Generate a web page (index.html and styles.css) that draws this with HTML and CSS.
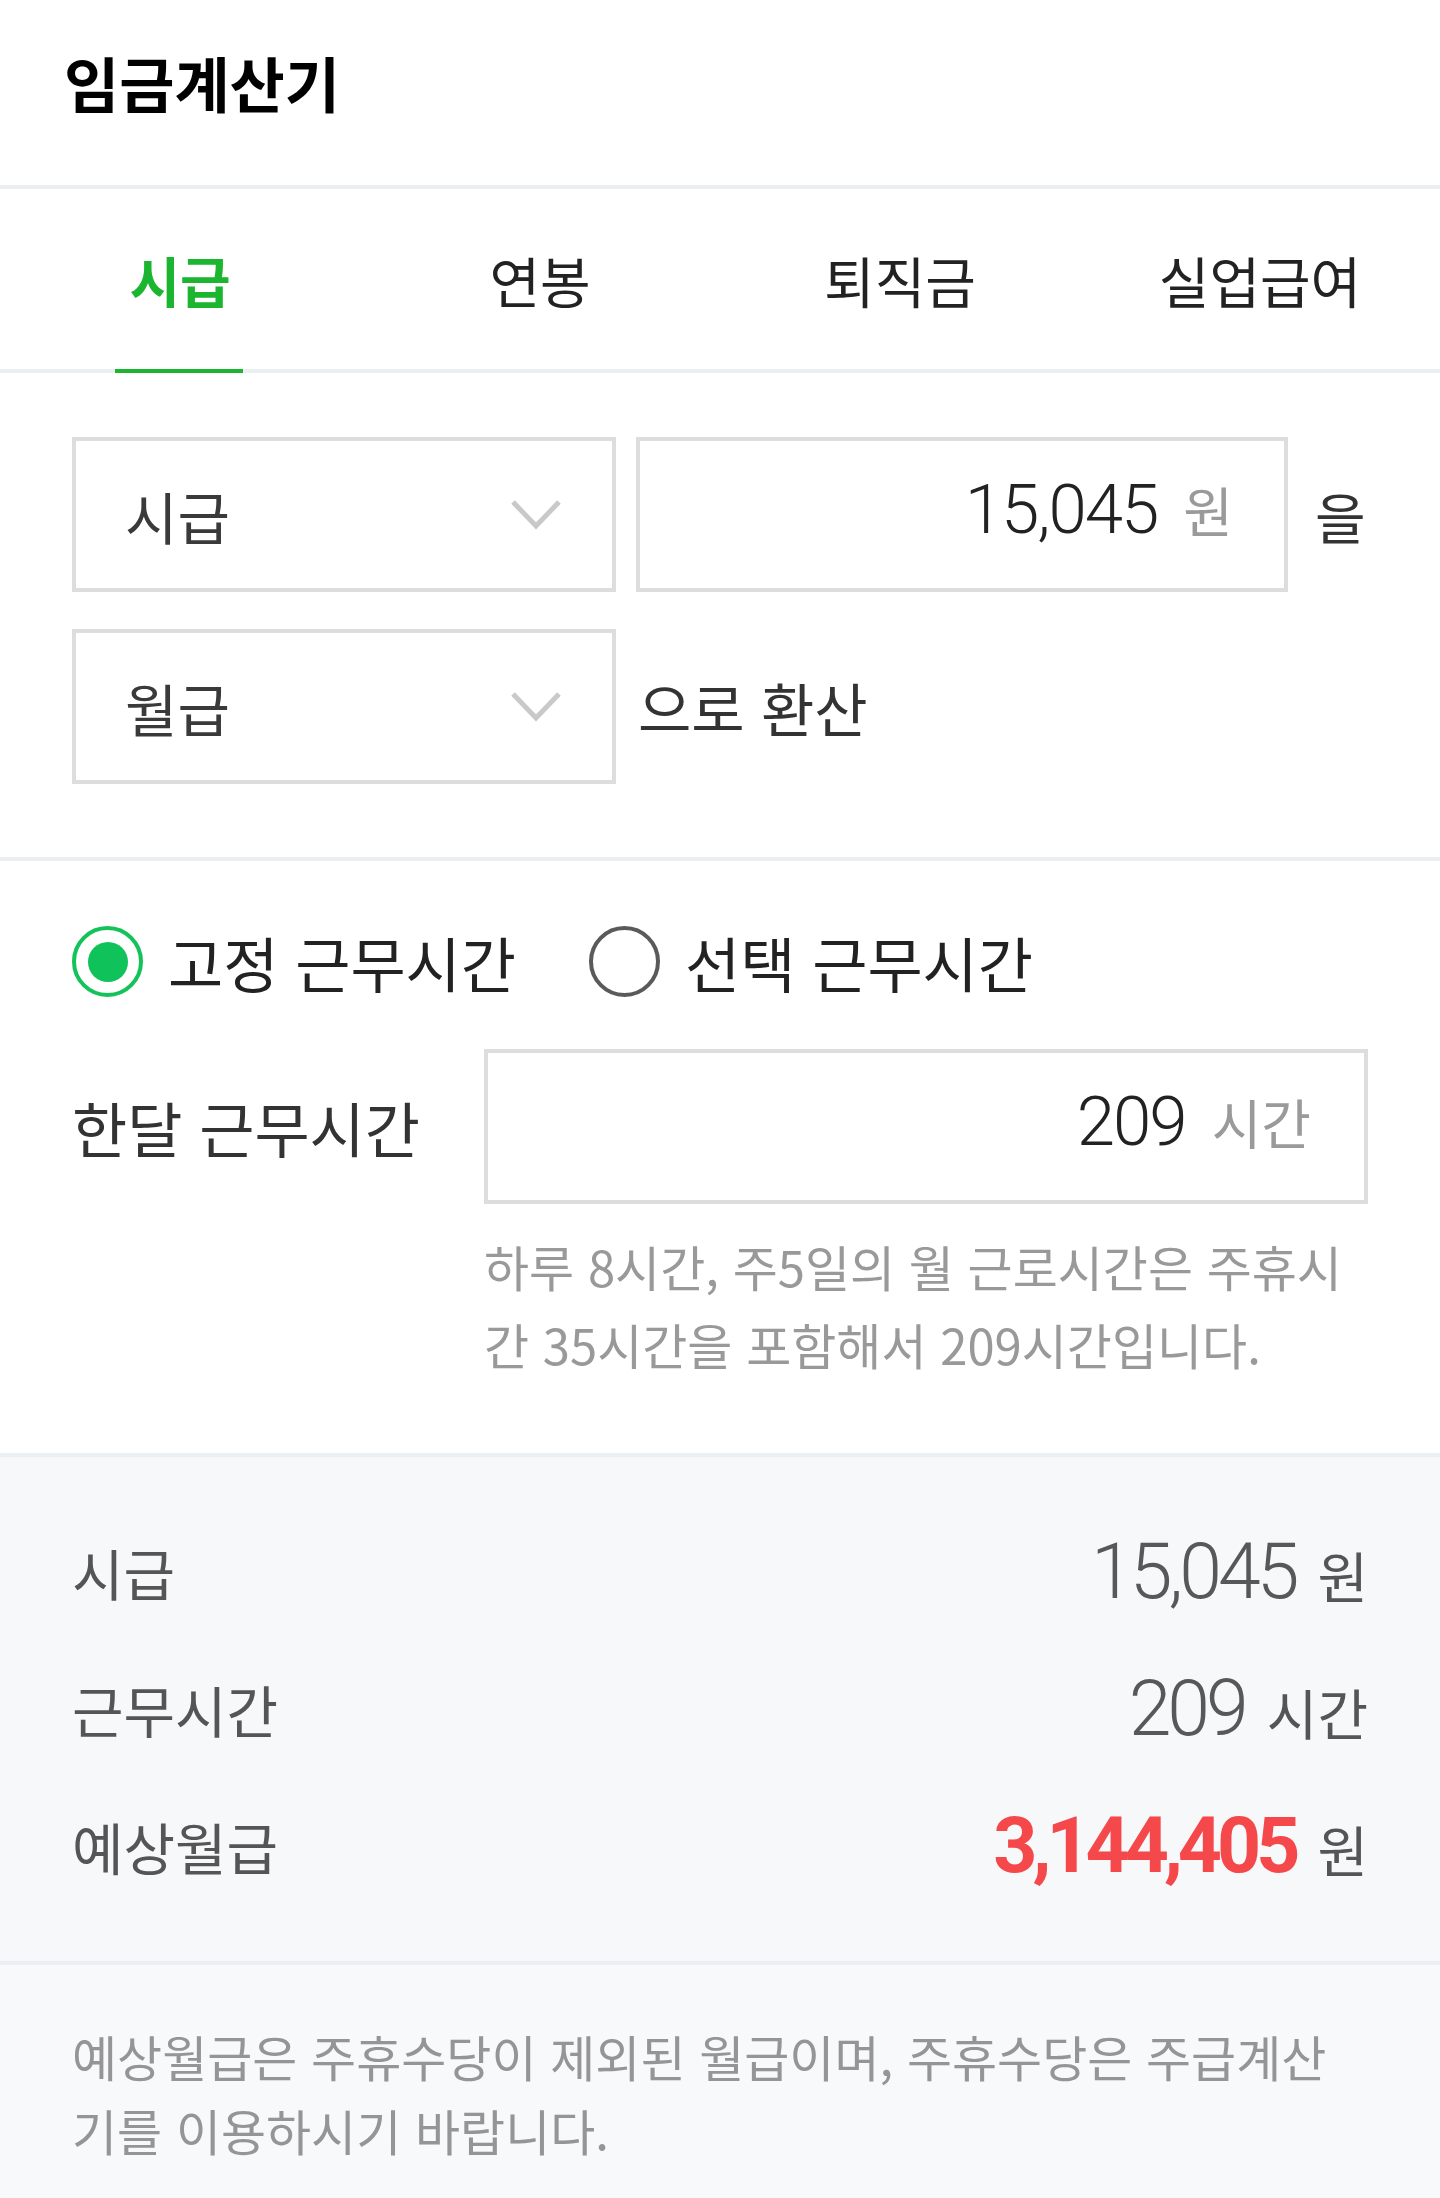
FILE: index.html
```html
<!DOCTYPE html>
<html lang="ko">
<head>
    <meta charset="UTF-8">
    <meta name="viewport" content="width=device-width, initial-scale=1.0">
    <title>임금계산기</title>
    <link rel="stylesheet" href="styles.css">
</head>
<body>
    <header class="header">
        <h1 class="title">임금계산기</h1>
    </header>

    <nav class="tabs">
        <a class="tab active">시급</a>
        <a class="tab">연봉</a>
        <a class="tab">퇴직금</a>
        <a class="tab">실업급여</a>
    </nav>

    <section class="convert">
        <div class="convert-row">
            <div class="select">
                <span>시급</span>
                <svg class="chevron" width="52" height="31" viewBox="0 0 52 31"><polyline points="3,3 26,27 49,3" fill="none" stroke="#c9c9c9" stroke-width="5"/></svg>
            </div>
            <div class="field field-amount">
                <span class="num">15,045</span>
                <span class="unit">원</span>
            </div>
            <span class="suffix">을</span>
        </div>
        <div class="convert-row">
            <div class="select">
                <span>월급</span>
                <svg class="chevron" width="52" height="31" viewBox="0 0 52 31"><polyline points="3,3 26,27 49,3" fill="none" stroke="#c9c9c9" stroke-width="5"/></svg>
            </div>
            <span class="suffix suffix-convert">으로 환산</span>
        </div>
    </section>

    <section class="hours">
        <div class="radios">
            <label class="radio checked"><span class="radio-mark"></span>고정 근무시간</label>
            <label class="radio"><span class="radio-mark"></span>선택 근무시간</label>
        </div>
        <div class="hours-row">
            <div class="hours-label">한달 근무시간</div>
            <div>
                <div class="field field-hours">
                    <span class="num">209</span>
                    <span class="unit">시간</span>
                </div>
                <p class="help">하루 8시간, 주5일의 월 근로시간은 주휴시<br>간 35시간을 포함해서 209시간입니다.</p>
            </div>
        </div>
    </section>

    <section class="result">
        <div class="result-row">
            <span class="result-label">시급</span>
            <span class="result-value"><span class="num">15,045</span><span class="unit">원</span></span>
        </div>
        <div class="result-row">
            <span class="result-label">근무시간</span>
            <span class="result-value"><span class="num">209</span><span class="unit">시간</span></span>
        </div>
        <div class="result-row">
            <span class="result-label">예상월급</span>
            <span class="result-value"><span class="num num-total">3,144,405</span><span class="unit">원</span></span>
        </div>
    </section>

    <p class="note">예상월급은 주휴수당이 제외된 월급이며, 주휴수당은 주급계산<br>기를 이용하시기 바랍니다.</p>
</body>
</html>
```

FILE: styles.css
```css
body {
    margin: 0;
    font-family: "Noto Sans CJK KR", "Noto Sans", sans-serif;
    background-color: #f8f9fb;
    color: #222;
}
.header {
    height: 189px;
    box-sizing: border-box;
    padding: 52px 0 0 64px;
    background-color: white;
    border-bottom: 4px solid #eceff2;
}
.title {
    margin: 0;
    font-size: 60px;
    line-height: 60px;
    font-weight: bold;
    color: #000;
}
.tabs {
    display: grid;
    grid-template-columns: repeat(4, 1fr);
    height: 184px;
    box-sizing: border-box;
    background-color: white;
    border-bottom: 4px solid #eceff2;
}
.tab {
    position: relative;
    display: flex;
    justify-content: center;
    align-items: center;
    font-size: 55px;
    color: #222;
}
.tab.active {
    color: #1bb530;
    font-weight: bold;
}
.tab.active::after {
    content: "";
    position: absolute;
    left: 50%;
    bottom: -4px;
    width: 128px;
    height: 4px;
    margin-left: -65px;
    background-color: #1bb530;
}
.convert {
    padding: 64px 72px 73px;
    background-color: white;
    border-bottom: 4px solid #eceff2;
    display: flex;
    flex-direction: column;
    gap: 37px;
}
.convert-row {
    display: flex;
    align-items: center;
}
.select {
    width: 544px;
    height: 155px;
    box-sizing: border-box;
    border: 4px solid #dcdddd;
    padding: 0 50px 0 49px;
    display: flex;
    justify-content: space-between;
    align-items: center;
    font-size: 57px;
    color: #3a3a3a;
}
.field {
    height: 155px;
    box-sizing: border-box;
    border: 4px solid #dcdddd;
    display: flex;
    justify-content: flex-end;
    align-items: baseline;
    padding-top: 28px;
    gap: 26px;
}
.field-amount {
    width: 652px;
    margin-left: 20px;
    padding-right: 51px;
}
.field-hours {
    padding-right: 53px;
}
.num {
    font-family: Roboto, "Noto Sans CJK KR", sans-serif;
    font-weight: 300;
    font-size: 69px;
    letter-spacing: -2px;
    color: #222;
}
.unit {
    font-size: 54px;
    color: #9a9a9a;
}
.suffix {
    margin-left: 27px;
    font-size: 55px;
    color: #333;
}
.suffix-convert {
    margin-left: 22px;
    font-size: 58px;
}
.hours {
    padding: 65px 72px 70px;
    background-color: white;
    border-bottom: 4px solid #eceff2;
}
.radios {
    display: flex;
    gap: 73px;
    height: 71px;
    margin-bottom: 52px;
}
.radio {
    display: flex;
    align-items: center;
    gap: 25px;
    font-size: 60px;
    color: #222;
}
.radio-mark {
    width: 71px;
    height: 71px;
    box-sizing: border-box;
    border-radius: 50%;
    border: 4px solid #5a5a5a;
    display: flex;
    justify-content: center;
    align-items: center;
}
.radio.checked .radio-mark {
    border-color: #13c35a;
}
.radio.checked .radio-mark::before {
    content: "";
    width: 40px;
    height: 40px;
    border-radius: 50%;
    background-color: #0fc35a;
}
.hours-row {
    display: grid;
    grid-template-columns: 412px 1fr;
}
.hours-label {
    height: 155px;
    display: flex;
    align-items: center;
    font-size: 60px;
    color: #333;
}
.help {
    margin: 23px 0 0;
    font-size: 49px;
    line-height: 78px;
    color: #999;
}
.result {
    padding: 46px 72px 47px;
    border-bottom: 4px solid #eceff2;
    background-color: #f7f8fa;
}
.result-row {
    height: 137px;
    display: flex;
    justify-content: space-between;
    align-items: center;
}
.result-label {
    font-size: 56px;
    color: #555;
}
.result-value {
    display: flex;
    align-items: baseline;
    gap: 22px;
}
.result-value .num {
    font-size: 77px;
    letter-spacing: -4px;
    color: #585858;
}
.result-value .unit {
    font-size: 55px;
    color: #555;
}
.result-value .num-total {
    font-weight: bold;
    letter-spacing: -5px;
    color: #f5484a;
}
.note {
    margin: 0;
    padding: 54px 72px 30px;
    font-size: 49px;
    line-height: 74px;
    color: #959595;
}
```
